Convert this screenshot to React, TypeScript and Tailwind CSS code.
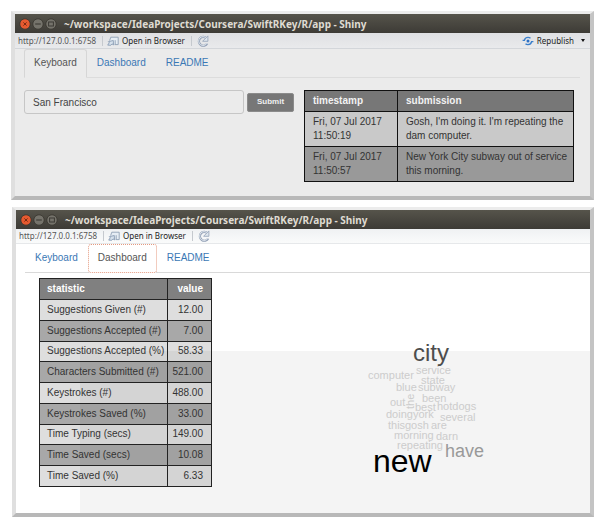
import type { ReactNode } from "react";

const TITLE = "~/workspace/IdeaProjects/Coursera/SwiftRKey/R/app - Shiny";
const TABS = ["Keyboard", "Dashboard", "README"];

const SUBMISSIONS = [
  ["Fri, 07 Jul 2017 11:50:19", "Gosh, I'm doing it. I'm repeating the dam computer."],
  ["Fri, 07 Jul 2017 11:50:57", "New York City subway out of service this morning."],
];

const STATS = [
  ["Suggestions Given (#)", "12.00"],
  ["Suggestions Accepted (#)", "7.00"],
  ["Suggestions Accepted (%)", "58.33"],
  ["Characters Submitted (#)", "521.00"],
  ["Keystrokes (#)", "488.00"],
  ["Keystrokes Saved (%)", "33.00"],
  ["Time Typing (secs)", "149.00"],
  ["Time Saved (secs)", "10.08"],
  ["Time Saved (%)", "6.33"],
];

type Word = { text: string; x: number; y: number; size?: number; fill?: string; vertical?: boolean };

const WORDS: Word[] = [
  { text: "city", x: 333, y: 10, size: 24, fill: "#4d4d4d" },
  { text: "service", x: 336, y: 23 },
  { text: "computer", x: 288, y: 28 },
  { text: "state", x: 341, y: 33 },
  { text: "blue", x: 316, y: 40 },
  { text: "subway", x: 338, y: 40 },
  { text: "out", x: 310, y: 55 },
  { text: "the", x: 334, y: 58, vertical: true },
  { text: "been", x: 342, y: 51 },
  { text: "best", x: 335, y: 60 },
  { text: "hotdogs", x: 357, y: 59 },
  { text: "doing", x: 306, y: 67 },
  { text: "york", x: 333, y: 67 },
  { text: "several", x: 360, y: 70 },
  { text: "this", x: 308, y: 78 },
  { text: "gosh", x: 325, y: 78 },
  { text: "are", x: 351, y: 78 },
  { text: "morning", x: 314, y: 88 },
  { text: "darn", x: 356, y: 89 },
  { text: "repeating", x: 317, y: 98 },
  { text: "have", x: 365, y: 106, size: 18, fill: "#999999" },
  { text: "new", x: 293, y: 121, size: 32, fill: "#000000" },
];

function WindowButton({ kind }: { kind: "close" | "minimize" | "maximize" }) {
  const close = kind === "close";
  return (
    <button type="button" aria-label={kind} className="size-3">
      <svg viewBox="0 0 12 12" className="size-full">
        <circle cx="6" cy="6" r="5.2" fill={close ? "#e65a30" : "#75736b"} stroke="#37352f" strokeWidth="0.8" />
        {close && <path d="M4.4 4.4l3.2 3.2M7.6 4.4L4.4 7.6" stroke="#7a2a12" strokeWidth="1" />}
        {kind === "minimize" && <path d="M3.2 6h5.6" stroke="#3b3934" strokeWidth="1.1" />}
        {kind === "maximize" && <rect x="3.6" y="4" width="4.8" height="4" fill="none" stroke="#3b3934" strokeWidth="1" />}
      </svg>
    </button>
  );
}

function BrowserIcon() {
  return (
    <svg viewBox="0 0 12 10" className="h-[10px] w-3" fill="none">
      <path d="M2.6 4.6L3.8 1.2h7.4v7.4H7.6" fill="#e6edf4" stroke="#8fa0b5" strokeWidth="0.9" />
      <path d="M8.2 4.2v4.2" stroke="#8fa0b5" strokeWidth="0.9" />
      <path d="M0.7 9.1l1.6-2.4-1-1 5-1.2.2 4.4-1.5-1-1.3 1.4z" fill="#d6e1ec" stroke="#7f93ad" strokeWidth="0.8" />
    </svg>
  );
}

function ReloadIcon() {
  return (
    <svg viewBox="0 0 12 12" className="size-3" fill="none">
      <path d="M9.4 3.2A4.4 4.4 0 1 0 10.2 8.4" stroke="#93a1b6" strokeWidth="2.2" />
      <path d="M9.4 3.2A4.4 4.4 0 1 0 9.9 8.2" stroke="#e9eef4" strokeWidth="0.9" />
      <path d="M10.9 0.9v5.4H5.6z" fill="#dfe6ee" stroke="#93a1b6" strokeWidth="0.8" />
    </svg>
  );
}

function PublishIcon() {
  return (
    <svg viewBox="0 0 12 10" className="h-[10px] w-3" fill="none" stroke="#3b7fcb">
      <circle cx="6" cy="5" r="1.5" fill="#2a6fc4" stroke="none" />
      <path d="M0.6 4.4h1.8C2.8 2.2 4.2 1.4 6 1.4c1 0 1.8.2 2.5.8" strokeWidth="1.4" />
      <path d="M11.4 5.6H9.6C9.2 7.8 7.8 8.6 6 8.6c-1 0-1.8-.2-2.5-.8" strokeWidth="1.4" />
    </svg>
  );
}

function TitleBar() {
  return (
    <header className="flex h-[19px] items-center bg-linear-to-b from-[#56544b] to-[#3d3b36] pl-1">
      <div className="flex gap-px">
        <WindowButton kind="close" />
        <WindowButton kind="minimize" />
        <WindowButton kind="maximize" />
      </div>
      <h1 className="ml-[7px] whitespace-nowrap font-['Noto_Sans',sans-serif] text-[10px] leading-4 font-bold text-[#dfdbd2]">
        {TITLE}
      </h1>
    </header>
  );
}

function Toolbar({ className, publish }: { className: string; publish?: boolean }) {
  return (
    <nav
      className={`flex items-center border-b pr-[5px] pl-[3px] font-['Noto_Sans',sans-serif] text-[8px] leading-[14px] whitespace-nowrap text-[#222] ${className}`}
    >
      <span className="text-[#555]">http://127.0.0.1:6758</span>
      <span className="mr-1 ml-[6px] h-[10px] w-px bg-[#c5c9ce]" />
      <button type="button" className="flex items-center gap-[3px]">
        <BrowserIcon />
        Open in Browser
      </button>
      <span className="mr-[5px] ml-[6px] h-[10px] w-px bg-[#c5c9ce]" />
      <button type="button" aria-label="Reload">
        <ReloadIcon />
      </button>
      {publish && (
        <button type="button" className="ml-auto flex items-center gap-[3px]">
          <PublishIcon />
          Republish
          <svg viewBox="0 0 4 3" className="ml-1 h-[3px] w-1">
            <path d="M0 0h4L2 3z" fill="#111" />
          </svg>
        </button>
      )}
    </nav>
  );
}

function Tabs({ active, className, activeClass }: { active: string; className: string; activeClass: string }) {
  return (
    <nav className={`flex h-[29px] border-b text-[10px] leading-[14px] ${className}`}>
      {TABS.map((tab) => (
        <a
          key={tab}
          href={`#${tab}`}
          className={`h-[29px] border px-[9px] pt-[6px] ${tab === active ? activeClass : "border-transparent text-[#3a78b5]"}`}
        >
          {tab}
        </a>
      ))}
    </nav>
  );
}

function AppWindow({ className, children }: { className: string; children: ReactNode }) {
  return (
    <section
      className={`border-4 border-t-3 border-t-[#ececec] border-r-[#c4c4c4] border-b-[#b8b8b8] border-l-[#dfdfdf] ${className}`}
    >
      <TitleBar />
      {children}
    </section>
  );
}

function KeyboardWindow() {
  return (
    <AppWindow className="bg-[#ebebeb] pb-[14px]">
      <Toolbar publish className="h-4 border-[#d3d6da] bg-linear-to-b from-[#dfe0e3] to-[#e9eaec]" />
      <Tabs
        active="Keyboard"
        className="mr-[10px] ml-[9px] border-[#dcdcdc]"
        activeClass="rounded-t-[3px] border-[#d6d6d6] border-b-[#ebebeb] text-[#555]"
      />
      <div className="mt-3 flex items-start pr-4 pl-[9px]">
        <form className="flex flex-1 items-center gap-[3px]">
          <input
            aria-label="Text"
            defaultValue="San Francisco"
            className="h-6 min-w-0 flex-1 rounded-[3px] border border-[#c6c6c6] px-2 text-[10px] text-[#444]"
          />
          <button
            type="button"
            className="h-[19px] w-[47px] rounded-[2px] border border-[#8b8b8b] bg-[#777] text-[8px] font-bold text-[#f0f0f0]"
          >
            Submit
          </button>
        </form>
        <table className="ml-[10px] w-[270px] table-fixed border-collapse text-[10px] leading-[14px] text-[#333]">
          <thead>
            <tr className="bg-[#777] text-left text-[#f2f2f2]">
              <th className="w-[93px] border border-[#111] py-[3px] pr-1 pl-2">timestamp</th>
              <th className="border border-[#111] py-[3px] pr-1 pl-2">submission</th>
            </tr>
          </thead>
          <tbody>
            {SUBMISSIONS.map(([time, text]) => (
              <tr key={time} className="bg-[#c9c9c9] even:bg-[#999]">
                <td className="border border-[#111] py-[3px] pr-1 pl-2">{time}</td>
                <td className="border border-[#111] py-[3px] pr-1 pl-2">{text}</td>
              </tr>
            ))}
          </tbody>
        </table>
      </div>
    </AppWindow>
  );
}

function WordCloud() {
  return (
    <svg className="h-[162px] w-full overflow-visible" role="img" aria-label="Word cloud">
      {WORDS.map((w) => (
        <text
          key={w.text}
          x={w.x}
          y={w.y}
          fontSize={w.size ?? 11}
          fill={w.fill ?? "#cccccc"}
          transform={w.vertical ? `rotate(-90 ${w.x} ${w.y})` : undefined}
        >
          {w.text}
        </text>
      ))}
    </svg>
  );
}

function DashboardWindow() {
  return (
    <AppWindow className="ml-px bg-white">
      <Toolbar className="h-[15px] border-[#e6e8ea] bg-linear-to-b from-[#eff1f3] to-[#fafbfb]" />
      <Tabs
        active="Dashboard"
        className="ml-[9px] border-[#d9d9d9]"
        activeClass="rounded-[3px] border-dotted border-[#e59a80] bg-white text-[#555]"
      />
      <div className="grid">
        <div className="col-start-1 row-start-1 mt-[78px] ml-16 bg-[#f4f4f4]">
          <WordCloud />
        </div>
        <table className="z-10 col-start-1 row-start-1 mt-[5px] ml-[23px] h-[209px] w-[173px] table-fixed border-collapse self-start text-[10px] leading-[14px] text-[#333]">
          <thead>
            <tr className="h-[21px] bg-[#808080] text-white">
              <th className="w-[128px] border border-[#222] pl-[7px] text-left">statistic</th>
              <th className="border border-[#222] pr-2 text-right">value</th>
            </tr>
          </thead>
          <tbody>
            {STATS.map(([name, value]) => (
              <tr key={name} className="bg-black/13 even:bg-black/34">
                <td className="border border-[#222] pl-[7px] whitespace-nowrap">{name}</td>
                <td className="border border-[#222] pr-2 text-right">{value}</td>
              </tr>
            ))}
          </tbody>
        </table>
      </div>
    </AppWindow>
  );
}

export default function App() {
  return (
    <main className="flex flex-col gap-[7px] bg-white px-[11px] pt-[11px] pb-[10px] font-['Liberation_Sans',Arial,sans-serif]">
      <KeyboardWindow />
      <DashboardWindow />
    </main>
  );
}
